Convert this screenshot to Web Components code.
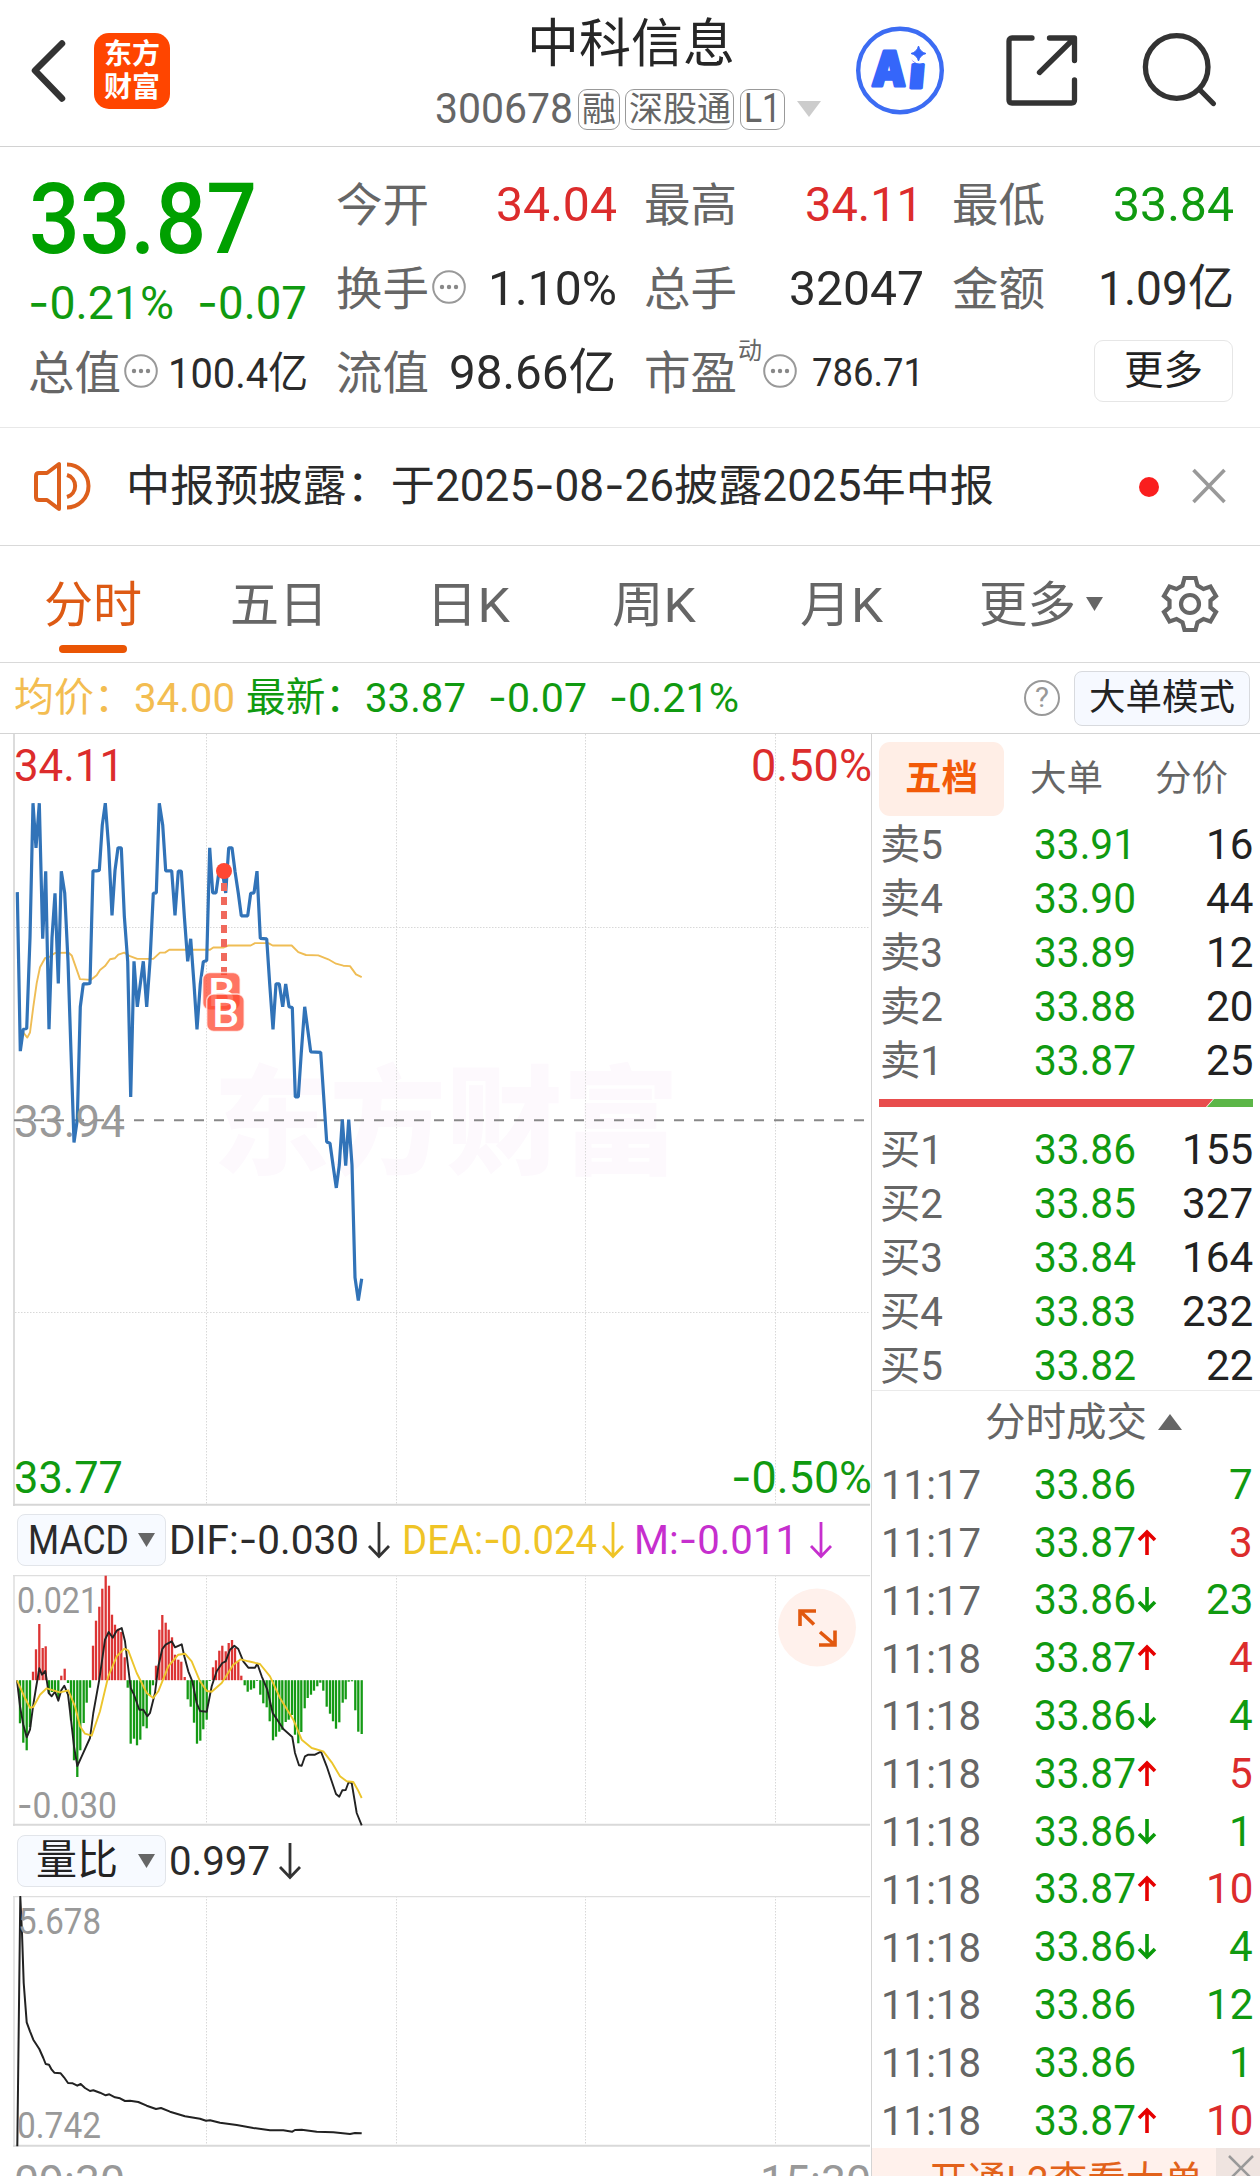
<!DOCTYPE html>
<html lang="zh-CN">
<head>
<meta charset="utf-8">
<title>中科信息 300678</title>
<style>
html,body{margin:0;padding:0;background:#fff}
body{width:1260px;height:2176px;overflow:hidden;font-family:Roboto,"Noto Sans CJK SC",sans-serif;color:#2b2b2b}
</style>
</head>
<body>
<stock-page></stock-page>
<script>
const GREEN='#109a10', RED='#dc2c2c', GREY='#666', INK='#2b2b2b', LINE='#d9d9d9';

/* Hyphens use a wider dash than Roboto offers. */
const dash = s => s.replace(/-/g,'<span style="font-family:Inter;line-height:0">-</span>');
/* Text run: font size, drawn width, colour, extra style. */
const T = (s,size,w,c,extra='') => `<q-text size="${size}" ${w?`w="${w}"`:''} style="color:${c||'inherit'};${extra}">${dash(s)}</q-text>`;

function define(name, render, after){
  customElements.define(name, class extends HTMLElement{
    connectedCallback(){
      if(this.shadowRoot) return;
      this.attachShadow({mode:'open'}).innerHTML = render(this);
      if(after) after(this);
    }
  });
}
const base = '*{box-sizing:border-box}svg{display:block;flex:none}';

/* Single-line text, condensed or widened to a given width. */
define('q-text', el => `<style>
:host{display:inline-block;flex:none;white-space:nowrap;line-height:1;font-size:${el.getAttribute('size')}px}
span{display:inline-block;transform-origin:0 50%;white-space:pre}
</style><span><slot></slot></span>`, el => {
  const w = parseFloat(el.getAttribute('w'));
  if(!w) return;
  const sp = el.shadowRoot.querySelector('span');
  const n = sp.getBoundingClientRect().width;
  el.style.width = w+'px';
  if(n) sp.style.transform = `scaleX(${w/n})`;
});

define('more-dots', () => `<style>:host{display:block;flex:none;width:34px;height:34px}svg{display:block}</style>
<svg width="34" height="34" viewBox="0 0 34 34"><circle cx="17" cy="17" r="15.8" fill="none" stroke="#999" stroke-width="2"/><g fill="#888"><circle cx="10" cy="17" r="2.2"/><circle cx="17" cy="17" r="2.2"/><circle cx="24" cy="17" r="2.2"/></g></svg>`);

define('app-logo', () => `<style>${base}
:host{display:flex;flex-direction:column;align-items:center;justify-content:center;gap:5px;width:76px;height:76px;border-radius:15px;background:#ff4500;flex:none;font-weight:700;color:#fff}
</style>${T('东方',28,56,'#fff')}${T('财富',28,56,'#fff')}`);

define('tag-badge', () => `<style>:host{display:flex;box-sizing:border-box;flex:none;height:41px;border:1.5px solid #999;border-radius:9px;align-items:center;justify-content:center;color:#666}</style><slot></slot>`);

define('page-header', () => `<style>${base}
:host{display:flex;box-sizing:border-box;height:147px;border-bottom:1px solid #d2d2d2;padding-left:28px;align-items:flex-start}
.back{margin-top:38px}
app-logo{margin:33px 0 0 26px}
.mid{width:388px;margin-left:265px;display:flex;flex-direction:column}
.title{margin:18px 0 0 92px;height:52px}
.sub{display:flex;align-items:center;height:42px;margin-top:18px}
.ai{margin:26px 0 0 33px}.share{margin:32px 0 0 59px}.search{margin:32px 0 0 62px}
</style>
<svg class="back" width="40" height="66" viewBox="0 0 40 66"><path d="M34 6 7 33 34 61" transform="translate(0 -.5)" fill="none" stroke="#333" stroke-width="6.5" stroke-linecap="round" stroke-linejoin="round"/></svg>
<app-logo></app-logo>
<div class="mid">
 <div class="title">${T('中科信息',52.5,208,'#262626')}</div>
 <div class="sub">${T('300678',42,138,GREY)}
 <tag-badge style="width:42px;margin-left:5px">${T('融',34,34)}</tag-badge>
 <tag-badge style="width:109px;margin-left:5px">${T('深股通',34.5,102)}</tag-badge>
 <tag-badge style="width:45px;margin-left:6px">${T('L1',40,37)}</tag-badge>
 <svg width="25" height="17" style="margin-left:12px"><path d="M0 0H24L12 16z" fill="#ccc"/></svg></div>
</div>
<svg class="ai" width="88" height="90" viewBox="0 0 88 90"><circle cx="44" cy="44.5" r="41.8" fill="none" stroke="#3c6cf3" stroke-width="4.4"/>
<g font-family="Inter" font-weight="900" fill="#3566fa" stroke="#3566fa" stroke-width="3" stroke-linejoin="round"><text transform="translate(15.500 59.500) skewX(-2)" font-size="48" textLength="34" lengthAdjust="spacingAndGlyphs">A</text><text transform="translate(52.500 61.500) skewX(-5)" font-size="43" textLength="15" lengthAdjust="spacingAndGlyphs">i</text></g>
<circle cx="63.500" cy="28" r="9.500" fill="#fff"/><path d="M62.500 20Q64 26 70 27.500Q64 29 62.500 35Q61 29 55 27.500Q61 26 62.500 20z" fill="#3566fa" stroke="#3566fa"/></svg>
<svg class="share" width="76" height="78" viewBox="0 0 76 78"><path d="M29 6H9Q6 6 6 9V68Q6 71 9 71H68.500Q71.500 71 71.500 68V48M46.500 6H71.500V28.500M71 6.500 36.500 40.500" fill="none" stroke="#333" stroke-width="5.300" stroke-linecap="round" stroke-linejoin="round"/></svg>
<svg class="search" width="80" height="78" viewBox="0 0 80 78"><circle cx="35.700" cy="35" r="31.300" fill="none" stroke="#333" stroke-width="5.300"/><path d="M58.500 57.500 72.300 71.500" stroke="#333" stroke-width="5.300" stroke-linecap="round"/></svg>`);

define('stat-cell', () => `<style>:host{display:flex;align-items:center;justify-content:space-between;height:60px;width:280px}div{display:flex;align-items:center}::slotted(more-dots){margin:-4px 0 0 3px}</style><div><slot name="l"></slot></div><slot></slot>`);

const cell = (label,val,w,c,o={}) => `<stat-cell style="width:${o.cw||282}px"><q-text slot="l" size="46" w="93" style="color:#666">${label}</q-text>${o.sup||''}${o.dots?'<more-dots slot="l"></more-dots>':''}${T(val,o.s||48.5,w,c)}</stat-cell>`;
define('stats-panel', () => `<style>${base}
:host{display:grid;box-sizing:border-box;height:281px;border-bottom:1px solid #e8e8e8;grid-template-columns:308px 308px 308px 282px;grid-template-rows:60px 60px 60px;row-gap:24px;padding:28px 0 0 28px}
.price{grid-row:1/3;display:flex;flex-direction:column}
.chg{display:flex;gap:23px;margin-top:12px;height:46px}
.btn{display:flex;align-items:center;justify-content:center;justify-self:end;width:139px;height:62px;border:1.5px solid #e6e6e6;border-radius:9px;margin:-3px 1px 0 0}
</style>
<div class="price"><div style="height:98px;margin:-4px 0 0 1px">${T('33.87',98,228,'#00a000','font-weight:500')}</div>
<div class="chg" style="margin-top:11px">${T('-0.21%',46,146,GREEN)}${T('-0.07',46,110,GREEN)}</div></div>
${cell('今开','34.04',121,RED,{cw:281})}${cell('最高','34.11',118,RED,{cw:279})}${cell('最低','33.84',121,GREEN)}
${cell('换手','1.10%',129,INK,{dots:1,cw:281})}${cell('总手','32047',135,INK,{cw:280})}${cell('金额','1.09亿',136,INK)}
${cell('总值','100.4亿',140,INK,{dots:1,s:43,cw:280})}${cell('流值','98.66亿',167,INK,{cw:280})}${cell('市盈','786.71',112,INK,{dots:1,s:38,cw:280,sup:'<q-text slot="l" size="24" w="24" style="color:#666;margin:-44px -2px 0 1px">动</q-text>'})}
<div class="btn">${T('更多',39.5,79,'#222')}</div>`);

define('notice-bar', () => `<style>${base}:host{display:flex;box-sizing:border-box;height:118px;border-bottom:1px solid #d9d9d9;align-items:center;padding:0 34px 2px 32px}i{width:20px;height:20px;border-radius:50%;background:#fa1e1e;margin:2px 33px 0 auto}</style>
<svg width="60" height="52" viewBox="0 0 60 52" fill="none" stroke="#dd5f1c" stroke-width="4" stroke-linejoin="round"><path d="M27 4V49L15 40H7Q4 40 4 37V16Q4 13 7 13H15Z"/><path d="M35 4.500A21.500 21.500 0 0 1 35 47.500M35 15A11.500 11.500 0 0 1 35 37"/></svg>
<div style="margin:2px 0 0 34px">${T('中报预披露：于2025-08-26披露2025年中报',43.5,868,INK)}</div><i></i>
<svg width="34" height="36" viewBox="0 0 34 36"><path d="M1.500 2 32.500 34M32.500 2 1.500 34" stroke="#999" stroke-width="3.600"/></svg>`);

define('period-tab', el => `<style>:host{display:flex;flex:none;flex-direction:column;align-items:center;color:${el.hasAttribute('on')?'#dd5a14':'#666'};padding-top:35px;height:115px;box-sizing:border-box}
i{display:${el.hasAttribute('on')?'block':'none'};width:68px;height:8px;border-radius:4px;background:#ea5504;margin-top:15px}</style><slot></slot><i></i>`);
define('period-tabs', () => `<style>${base}:host{display:flex;box-sizing:border-box;height:117px;border-bottom:1px solid #d9d9d9;padding-left:44px}</style>
<period-tab on>${T('分时',49,98)}</period-tab>
<period-tab style="margin-left:88px">${T('五日',49,98)}</period-tab>
<period-tab style="margin-left:98px">${T('日K',49,84)}</period-tab>
<period-tab style="margin-left:102px">${T('周K',49,84)}</period-tab>
<period-tab style="margin-left:104px">${T('月K',49,83)}</period-tab>
<period-tab style="margin-left:96px">${T('更多',49,97)}</period-tab>
<svg width="17" height="14" style="margin:51px 0 0 10px"><path d="M0 0H17L8.500 14z" fill="#666"/></svg>
<svg width="64" height="64" viewBox="-32 -32 64 64" style="margin:26px 0 0 55px"><path fill="none" stroke="#666" stroke-width="4.200" d="M-5.500 -26H5.500L7.500 -18.500L13.500 -15L20.500 -17.500L26 -8L20.500 -3.500V3.500L26 8L20.500 17.500L13.500 15L7.500 18.500L5.500 26H-5.500L-7.500 18.500L-13.500 15L-20.500 17.500L-26 8L-20.500 3.500V-3.500L-26 -8L-20.500 -17.500L-13.500 -15L-7.500 -18.500Z"/><circle r="9" fill="none" stroke="#666" stroke-width="4.200"/></svg>`);

define('price-info', () => `<style>${base}:host{display:flex;box-sizing:border-box;height:71px;border-bottom:1px solid #d4d4d4;align-items:center;padding-left:14px}
.q{width:36px;height:36px;border:2.4px solid #999;border-radius:50%;display:flex;align-items:center;justify-content:center;margin-left:auto}
.b{display:flex;align-items:center;justify-content:center;width:176px;height:55px;border:1.5px solid #d8dade;border-radius:8px;background:#f6f9ff;margin:0 10px 0 14px}</style>
${T('均价：',40,120,'#f3bd51')}${T('34.00',41.5,101,'#f3bd51')}
<span style="width:11px"></span>${T('最新：',40,119,GREEN)}${T('33.87',41.5,101,GREEN)}
<span style="width:22px"></span>${T('-0.07',41.5,99,GREEN)}<span style="width:22px"></span>${T('-0.21%',41.5,130,GREEN)}
<div class="q">${T('?',27,14,'#999')}</div><div class="b">${T('大单模式',36,146,'#222')}</div>`);

/* ---- charts ---- */
const GX=[206.4,396,585.4,775.3];
const st=(x,y,s,size,w,c,extra='')=>`<text x="${x}" y="${(y+size*.356).toFixed(1)}" font-size="${size}" textLength="${w}" lengthAdjust="spacingAndGlyphs" fill="${c}" ${extra}>${s.startsWith('-')?'<tspan font-family="Inter">-</tspan>'+s.slice(1):s}</text>`;
const conv=(str,fx,fy)=>str.trim().split(/\s+/).map(p=>{const a=p.split(',');return fx(+a[0]).toFixed(1)+','+fy(+a[1]).toFixed(1)}).join(' ');
const grid=(h)=>`<g stroke="#d8d8d8" stroke-width="1" stroke-dasharray="1.500 1.500">${GX.map(x=>`<path d="M${Math.floor(x)+.5} 0V${h}"/>`).join('')}</g>`;

const PRICE=`52,410 61,812 70,757 80,755 90,525 99,185 108,298 118,185 128,528 137,357 147,757 156,525 165,413 175,641 184,357 194,412 204,585 213,815 222,1043 232,985 241,700 250,642 260,642 270,641 279,356 289,356 298,355 307,240 316,185 326,298 336,469 345,355 354,298 364,298 373,470 383,585 392,928 402,585 412,700 421,642 430,585 440,700 450,585 460,413 469,412 478,185 488,240 497,356 515,356 525,469 535,357 544,357 553,470 563,585 572,528 582,642 591,757 601,642 610,586 620,583 629,298 638,412 648,412 657,357 667,357 677,412 686,298 696,298 705,357 715,413 724,470 743,470 752,413 762,412 771,357 781,527 800,528 809,642 819,757 828,642 838,642 848,700 857,642 867,700 877,702 886,928 895,928 904,815 914,700 923,757 932,814 962,815 971,928 980,1042 990,1045 999,1100 1009,1158 1018,1100 1027,985 1037,1102 1046,985 1056,1100 1065,1385 1075,1443 1085,1388`;
const AVG=`70,765 82,778 90,765 100,700 110,640 120,600 135,577 150,573 165,564 205,563 215,570 240,630 272,632 290,620 300,607 315,597 330,580 345,577 355,568 373,563 390,572 412,579 460,579 480,563 495,563 508,556 630,556 640,550 670,550 685,545 752,545 765,539 805,539 818,545 875,545 895,562 918,569 955,570 985,580 1008,591 1030,596 1050,597 1068,618 1085,625`;
define('intraday-chart', () => {
  const fx=x=>x/3, fy=y=>y/2.529-4;
  const B=(x,y)=>`<rect x="${x}" y="${y}" width="37.500" height="37.500" rx="7" fill="#ff4a32" fill-opacity=".76" stroke="#fff" stroke-opacity=".7" stroke-width="1.500"/><text x="${x+19}" y="${y+33}" font-family="Roboto" font-weight="500" font-size="38" textLength="27" lengthAdjust="spacingAndGlyphs" text-anchor="middle" fill="#fff">B</text>`;
  return `<style>:host{display:block;height:772px}svg{display:block}</style>
<svg width="871" height="772" viewBox="0 0 871 772">
<text x="213" y="431" font-family="Noto Sans CJK SC" font-weight="900" font-size="118" textLength="466" lengthAdjust="spacingAndGlyphs" fill="#fdf9fd">东方财富</text>
${grid(770)}
<path d="M15 193.500H870M15 578.500H870" stroke="#d8d8d8" stroke-dasharray="1.500 1.500"/>
<path d="M14 0V772" stroke="#dcdcdc" stroke-width="2"/><path d="M13 770.700H870" stroke="#d6d6d6" stroke-width="2"/>
<path d="M14 386.300H868" stroke="#888" stroke-width="2" stroke-dasharray="10 10"/>
<polyline points="${conv(AVG,fx,fy)}" fill="none" stroke="#efbd55" stroke-width="1.900" stroke-linejoin="round"/>
<polyline points="${conv(PRICE,fx,fy)}" fill="none" stroke="#3173b8" stroke-width="3.200" stroke-linejoin="bevel"/>
<path d="M224 149V245" stroke="#f0695c" stroke-width="6" stroke-dasharray="8 6"/><circle cx="224" cy="137" r="8" fill="#ff4733"/>
${B(202.7,238.500)}${B(206.7,260)}
${st(14,31.3,'34.11',44.5,110,RED)}${st(751,31.3,'0.50%',44.5,121,RED)}
${st(14,387,'33.94',44.5,111,'#999')}${st(14,743,'33.77',44.5,109,GREEN)}${st(731,743,'-0.50%',44.5,141,GREEN)}
</svg>`});

const down=c=>`<svg width="24" height="38" viewBox="0 0 24 38" style="display:block;flex:none"><path d="M12 1V35M2 25 12 35.500 22 25" fill="none" stroke="${c}" stroke-width="2.800"/></svg>`;
define('indicator-bar', () => `<style>:host{display:flex;height:71px;align-items:center;box-sizing:border-box;padding-left:17px;padding-bottom:1px}
.b{display:flex;box-sizing:border-box;align-items:center;justify-content:space-between;width:149px;height:52px;border:1px solid #e2e5ea;border-radius:8px;background:#f7faff;padding:0 10px;margin-right:3px}</style>
<div class="b"><slot name="name"></slot><svg width="17" height="14"><path d="M0 0H17L8.500 14z" fill="#666"/></svg></div><slot></slot>`);

const BARS=`60,731 70,789 80,812 90,742 99,576 108,509 118,433 128,505 137,500 147,640 156,637 165,640 175,655 184,588 194,567 204,610 213,722 222,842 232,892 241,812 251,730 260,669 270,624 279,498 288,423 298,381 307,327 317,288 327,318 336,405 345,435 355,447 364,457 374,533 383,624 392,792 402,777 411,797 421,780 430,740 440,746 450,648 459,617 468,558 478,450 487,406 497,429 506,450 516,473 525,525 535,540 544,546 554,592 563,659 572,681 582,729 591,792 601,783 610,749 620,720 629,604 639,563 648,542 658,513 667,498 677,515 686,490 696,481 705,505 715,545 724,588 734,617 743,636 753,630 762,626 771,604 781,645 790,671 800,683 809,725 819,782 828,771 838,756 847,750 857,727 866,720 876,706 885,765 895,791 904,757 914,686 923,655 933,645 942,633 952,620 961,609 970,633 980,681 990,702 999,725 1008,747 1018,728 1028,669 1037,659 1046,606 1056,605 1066,692 1075,756 1085,763`;
const DIF=`51,602 60,680 70,735 80,773 90,750 100,675 108,625 118,566 126,585 136,574 146,640 155,650 165,636 175,663 184,632 193,618 204,645 213,720 222,800 232,859 245,830 270,775 280,700 298,600 315,480 326,457 338,474 350,453 365,445 375,485 392,625 402,645 410,668 418,690 430,690 442,710 450,700 465,640 475,560 487,508 497,495 515,485 525,503 545,494 553,530 565,575 577,605 590,670 600,694 620,696 635,620 650,575 667,550 677,545 690,510 703,498 715,508 730,545 745,564 765,564 772,552 785,590 802,630 818,700 850,748 877,772 885,820 897,857 905,858 915,830 925,825 945,825 963,816 980,860 995,905 1008,943 1018,951 1027,932 1037,931 1046,907 1055,910 1070,1000 1085,1037`;
const DEA=`51,602 75,655 90,684 100,682 120,645 140,626 180,638 205,632 225,680 240,740 255,762 275,768 300,695 325,590 350,530 373,507 385,513 410,580 440,640 460,655 475,635 505,560 535,525 555,522 575,545 600,605 620,634 635,636 665,610 700,555 722,539 745,545 780,553 810,590 840,655 880,720 905,780 935,805 970,815 995,848 1020,890 1040,905 1060,907 1073,930 1085,955`;
const frame=`<path d="M14 0V251M13 .500H870" stroke="#dedede" stroke-width="1.500" fill="none"/><path d="M13 249.800H870" stroke="#d9d9d9" stroke-width="2"/>`;
define('macd-chart', () => {
  const fx=x=>x/3, fy=y=>(y-286)/3;
  const bars=BARS.split(' ').map(p=>{const [x,y]=p.split(',').map(Number);const a=fy(601.5),b=fy(y);return `<path d="M${fx(x).toFixed(1)} ${a.toFixed(1)}V${b.toFixed(1)}" stroke="${b<a?'#dc3434':'#149a14'}"/>`}).join('');
  return `<style>:host{display:block;height:251px}svg{display:block}</style>
<svg width="871" height="251" viewBox="0 0 871 251">${grid(250)}${frame}
${st(17,25,'0.021',36,81,'#999')}${st(17,230,'-0.030',36,100,'#999')}
<g stroke-width="2.300">${bars}</g>
<polyline points="${conv(DIF,fx,fy)}" fill="none" stroke="#222" stroke-width="1.900" stroke-linejoin="round"/>
<polyline points="${conv(DEA,fx,fy)}" fill="none" stroke="#ecc52c" stroke-width="1.900" stroke-linejoin="round"/>
<circle cx="817" cy="52.500" r="39" fill="#fff1ec"/><path d="M816 36H800V51M800 36 814 49.500M819 70H835V55.500M835 70 820 57" fill="none" stroke="#e2590f" stroke-width="3.600"/>
</svg>`});

const RATIO=`52,980 61,231 66,340 71,490 80,608 90,635 100,660 118,688 130,715 137,733 147,735 155,750 163,759 182,761 192,773 204,790 218,791 232,798 242,793 255,805 270,814 280,812 300,819 317,827 328,824 345,833 360,836 375,844 390,843 415,847 440,858 468,868 483,865 510,876 555,890 600,897 618,903 630,902 660,909 710,916 760,925 810,932 850,932 877,936 885,931 905,930 950,936 1000,938 1050,943 1065,940 1085,941`;
define('ratio-chart', () => `<style>:host{display:block;height:280px}svg{display:block}</style>
<svg width="871" height="280" viewBox="0 0 871 280">${grid(250)}${frame}
<polyline points="${conv(RATIO,x=>x/3,y=>(y-229)/3)}" fill="none" stroke="#222" stroke-width="2" stroke-linejoin="round"/>
${st(18,25,'5.678',36,83,'#999')}${st(17,229.500,'0.742',36,84,'#999')}
${st(14,285.500,'09:30',44,111,'#999')}${st(760,285.500,'15:30',44,111,'#999')}
</svg>`);

/* ---- order book ---- */
define('book-row', el => `<style>:host{display:grid;grid-template-columns:154px 1fr auto;align-items:center;height:54px}</style>
${T(el.dataset.l,40.5,63,GREY)}${T(el.dataset.p,42,102,GREEN)}${T(el.dataset.q,42,el.dataset.q.length*23.7,'#222')}`);
const book=(l,p,q)=>`<book-row data-l="${l}" data-p="${p}" data-q="${q}"></book-row>`;
define('order-book', () => `<style>${base}:host{display:block;height:657px;border-bottom:1px solid #eaeaea;padding:7px 7px 0 7px;box-sizing:border-box}
.tabs{display:flex;height:75px;align-items:center}
.on{display:flex;align-items:center;justify-content:center;width:125px;height:74px;border-radius:11px;background:#ffeee6;font-weight:700}
.rows{padding:1px 0 0 1px}</style>
<div class="tabs"><div class="on">${T('五档',36,73,'#f25a08')}</div><div style="margin-left:26px">${T('大单',36,73,GREY)}</div><div style="margin-left:52px">${T('分价',36,73,GREY)}</div></div>
<div class="rows" style="margin-top:1px">${book('卖5','33.91','16')}${book('卖4','33.90','44')}${book('卖3','33.89','12')}${book('卖2','33.88','20')}${book('卖1','33.87','25')}</div>
<svg width="374" height="8" style="margin:11px 0 15px"><path d="M0 0H334L327 8H0z" fill="#e84d4d"/><path d="M335 0H374V8H328z" fill="#5cb648"/></svg>
<div class="rows">${book('买1','33.86','155')}${book('买2','33.85','327')}${book('买3','33.84','164')}${book('买4','33.83','232')}${book('买5','33.82','22')}</div>`);

define('trade-row', el => {const d=el.dataset, up=d.d==='u';
 const ar = d.d ? `<svg width="20" height="27" viewBox="0 0 20 27"><path ${up?'':'transform="translate(0 27) scale(1 -1)"'} d="M10 26V3M2 11 10 3 18 11" fill="none" stroke="${up?'#e60000':'#0a9a0a'}" stroke-width="3.600"/></svg>`:'';
 return `<style>:host{display:grid;grid-template-columns:153px 1fr auto;align-items:center;height:57.8px}div{display:flex;align-items:center;gap:1px}svg{margin-bottom:1px}</style>
${T(d.t,41.5,100,GREY)}<div>${T(d.p,42,102,GREEN)}${ar}</div>${T(d.q,42,d.q.length*23.7,d.c==='r'?RED:GREEN)}`});
const TR=[['11:17','33.86','','7','g'],['11:17','33.87','u','3','r'],['11:17','33.86','d','23','g'],['11:18','33.87','u','4','r'],['11:18','33.86','d','4','g'],['11:18','33.87','u','5','r'],['11:18','33.86','d','1','g'],['11:18','33.87','u','10','r'],['11:18','33.86','d','4','g'],['11:18','33.86','','12','g'],['11:18','33.86','','1','g'],['11:18','33.87','u','10','r']];
define('trade-list', () => `<style>${base}:host{display:block;height:757px;padding:0 7px 0 9px;box-sizing:border-box}
.h{display:flex;align-items:center;height:65px;padding-left:104px;gap:11px}</style>
<div class="h">${T('分时成交',40.3,162,GREY)}<svg width="25" height="17" style="margin-bottom:3px"><path d="M0 16H24L12 0z" fill="#666"/></svg></div>
${TR.map(r=>`<trade-row data-t="${r[0]}" data-p="${r[1]}" data-d="${r[2]}" data-q="${r[3]}" data-c="${r[4]}"></trade-row>`).join('')}`);

define('promo-strip', () => `<style>${base}:host{display:flex;height:60px;background:#fff1ec;align-items:flex-start;justify-content:space-between;padding-left:57px}
.x{width:44px;height:60px;background:#efe4e0;display:flex;justify-content:center;padding:7px 0 0 5px}</style>
<div style="padding-top:14px">${T('开通L2查看大单',40,274,'#e2621a')}</div>
<div class="x"><svg width="28" height="26"><path d="M2 1 26 25M26 1 2 25" stroke="#999" stroke-width="2.500"/></svg></div>`);

define('stock-page', () => `<style>${base}:host{display:flex;flex-direction:column;width:1260px;height:2176px;overflow:hidden;background:#fff}
.body{display:flex;flex:none;height:1442px;overflow:hidden}.l{width:871px;flex:none;display:flex;flex-direction:column}.l>*{flex:none}.r{width:389px;border-left:1px solid #d4d4d4;flex:none}
page-header,stats-panel,notice-bar,period-tabs,price-info{flex:none}</style>
<page-header></page-header><stats-panel></stats-panel><notice-bar></notice-bar><period-tabs></period-tabs><price-info></price-info>
<div class="body"><div class="l">
<intraday-chart></intraday-chart>
<indicator-bar style="height:69px"><q-text slot="name" size="41.5" w="101" style="color:#2b2b2b">MACD</q-text>
${T('DIF:-0.030',41.5,190,INK)}<span style="width:8px"></span>${down('#333')}<span style="width:11px"></span>
${T('DEA:-0.024',41.5,195,'#efc426')}<span style="width:4px"></span>${down('#efc426')}<span style="width:9px"></span>
${T('M:-0.011',41.5,164,'#c62fce')}<span style="width:11px"></span>${down('#c62fce')}</indicator-bar>
<macd-chart></macd-chart>
<indicator-bar style="height:70px"><q-text slot="name" size="41" w="82" style="color:#222;margin-left:8px">量比</q-text>
${T('0.997',41.5,101,INK)}<span style="width:8px"></span>${down('#333')}</indicator-bar>
<ratio-chart></ratio-chart>
</div><div class="r"><order-book></order-book><trade-list></trade-list><promo-strip></promo-strip></div></div>`);
</script>
</body>
</html>
